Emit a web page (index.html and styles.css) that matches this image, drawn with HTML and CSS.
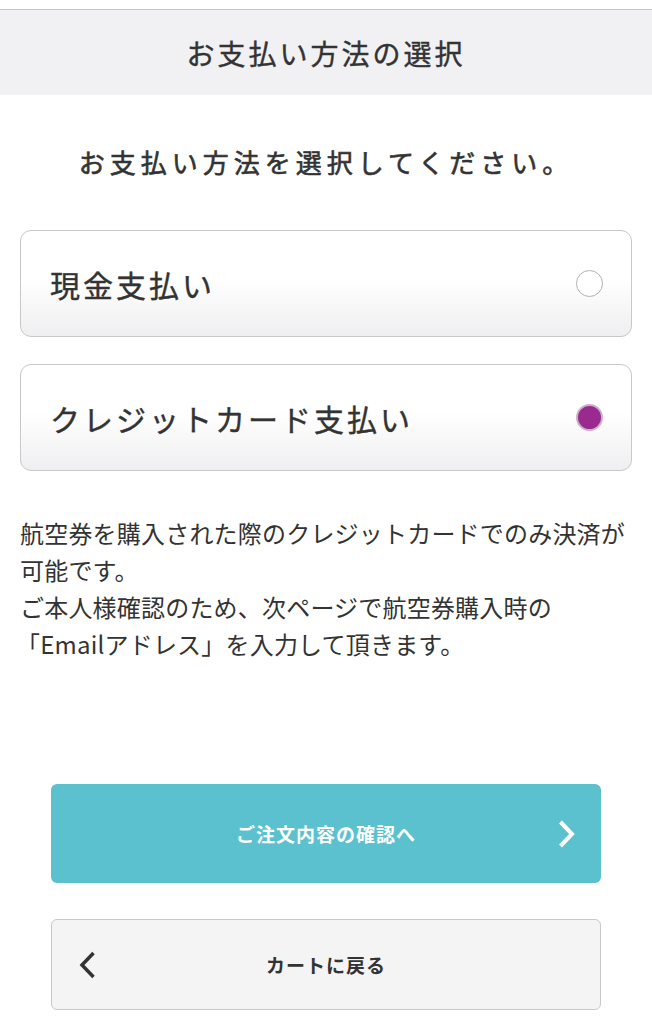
FILE: index.html
```html
<!DOCTYPE html>
<html lang="ja">
<head>
  <meta charset="UTF-8">
  <title>お支払い方法の選択</title>
  <link rel="stylesheet" href="styles.css">
</head>
<body>

  <div class="top-strip"></div>
  <header class="page-header">お支払い方法の選択</header>

  <h2 class="lead">お支払い方法を選択してください。</h2>

  <div class="options">
    <label class="option">
      <span class="option-label">現金支払い</span>
      <span class="radio"></span>
    </label>
    <label class="option">
      <span class="option-label">クレジットカード支払い</span>
      <span class="radio checked"></span>
    </label>
  </div>

  <p class="note">航空券を購入された際のクレジットカードでのみ決済が可能です。<br>ご本人様確認のため、次ページで航空券購入時の<br><span class="bracket">「</span>Emailアドレス」を入力して頂きます。</p>

  <div class="actions">
    <button class="btn btn-next">
      <span>ご注文内容の確認へ</span>
      <svg class="chev chev-right" width="17" height="29" viewBox="0 0 17 29"><polyline points="2.5,2.5 14,14.5 2.5,26.5" fill="none" stroke="#fff" stroke-width="4"/></svg>
    </button>
    <button class="btn btn-back">
      <svg class="chev chev-left" width="17" height="29" viewBox="0 0 17 29"><polyline points="14.5,2.5 3,14.5 14.5,26.5" fill="none" stroke="#333" stroke-width="3.5"/></svg>
      <span>カートに戻る</span>
    </button>
  </div>

</body>
</html>
```

FILE: styles.css
```css
* {
  box-sizing: border-box;
  margin: 0;
  padding: 0;
}
body {
  background: #fff;
  color: #333;
  font-family: "Noto Sans CJK JP", "Noto Sans", sans-serif;
}
.top-strip {
  height: 10px;
  border-bottom: 1px solid #c4c4c6;
}
.page-header {
  height: 85px;
  background: #f1f1f3;
  display: flex;
  align-items: center;
  justify-content: center;
  font-size: 28px;
  font-weight: 400;
  letter-spacing: 3px;
  color: #333;
  -webkit-text-stroke: 0.4px #333;
}
.lead {
  margin-top: 47px;
  line-height: 40px;
  text-align: center;
  font-size: 26px;
  font-weight: 400;
  letter-spacing: 5px;
  color: #333;
  -webkit-text-stroke: 0.6px #333;
}
.options {
  margin-top: 48px;
  padding: 0 20px;
  display: flex;
  flex-direction: column;
  gap: 27px;
}
.option {
  height: 107px;
  border: 1px solid #c8c8ca;
  border-radius: 11px;
  background: linear-gradient(#fff 45%, #efeff1);
  display: flex;
  align-items: center;
  justify-content: space-between;
  padding: 0 28px 0 29px;
}
.option-label {
  font-size: 30px;
  font-weight: 400;
  letter-spacing: 3px;
  color: #333;
  -webkit-text-stroke: 0.4px #333;
}
.radio {
  width: 27px;
  height: 27px;
  border-radius: 50%;
  border: 1.5px solid #b0b0b2;
  background: #fff;
}
.radio.checked {
  background: #9a2a90;
  border: 2px solid #cbb0c8;
}
.note {
  margin-top: 43px;
  padding: 0 18px 0 20px;
  font-size: 24px;
  line-height: 37px;
  letter-spacing: 0.2px;
  color: #333;
}
.bracket {
  margin-left: -4px;
}
.actions {
  margin-top: 122px;
  padding: 0 51px;
  display: flex;
  flex-direction: column;
  gap: 36px;
}
.btn {
  position: relative;
  display: flex;
  align-items: center;
  justify-content: center;
  width: 100%;
  border-radius: 6px;
  font-family: inherit;
  font-size: 19px;
  font-weight: 700;
  letter-spacing: 1px;
  cursor: pointer;
}
.btn-next {
  height: 99px;
  background: #5cc1cf;
  border: none;
  color: #fff;
}
.btn-back {
  height: 91px;
  background: #f4f4f5;
  border: 1px solid #c8c8ca;
  color: #333;
}
.chev {
  position: absolute;
  top: 50%;
  transform: translateY(-50%);
}
.chev-right {
  right: 26px;
}
.chev-left {
  left: 27px;
}
```
